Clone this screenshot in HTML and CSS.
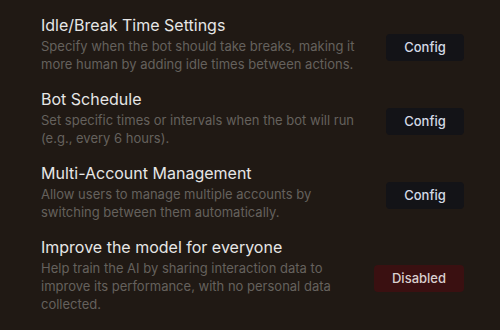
FILE: index.html
```html
<!DOCTYPE html>
<html>
<head>
<meta charset="utf-8">
<link rel="stylesheet" href="styles.css">
</head>
<body>
<div class="settings">
  <div class="row">
    <div class="text">
      <div class="title">Idle/Break Time Settings</div>
      <div class="desc">Specify when the bot should take breaks, making it more human by adding idle times between actions.</div>
    </div>
    <button class="btn">Config</button>
  </div>
  <div class="row">
    <div class="text">
      <div class="title">Bot Schedule</div>
      <div class="desc">Set specific times or intervals when the bot will run (e.g., every 6 hours).</div>
    </div>
    <button class="btn">Config</button>
  </div>
  <div class="row">
    <div class="text">
      <div class="title">Multi-Account Management</div>
      <div class="desc">Allow users to manage multiple accounts by switching between them automatically.</div>
    </div>
    <button class="btn">Config</button>
  </div>
  <div class="row">
    <div class="text">
      <div class="title">Improve the model for everyone</div>
      <div class="desc">Help train the AI by sharing interaction data to improve its performance, with no personal data collected.</div>
    </div>
    <button class="btn btn-danger">Disabled</button>
  </div>
</div>
</body>
</html>
```
FILE: styles.css
```css
html, body {
  margin: 0;
  padding: 0;
  background: #201914;
  font-family: Inter, "Noto Sans", sans-serif;
}
.settings {
  display: flex;
  flex-direction: column;
  gap: 14px;
  padding: 13px 36px 0 41px;
}
.row {
  display: flex;
  align-items: center;
  gap: 16px;
}
.text {
  flex: 1;
  min-width: 0;
}
.title {
  font-size: 16px;
  line-height: 24px;
  color: #e6e6e6;
}
.desc {
  font-size: 13px;
  line-height: 18px;
  color: #65615d;
}
.btn {
  flex: none;
  height: 27px;
  width: 78px;
  border: none;
  border-radius: 4px;
  background: #131317;
  color: #d3dae6;
  font-family: Inter, "Noto Sans", sans-serif;
  font-size: 13px;
  font-weight: 500;
  margin-top: 8px;
  padding: 0;
}
.btn-danger {
  width: 90px;
  background: #3a1011;
  color: #d9cfcf;
}
```
